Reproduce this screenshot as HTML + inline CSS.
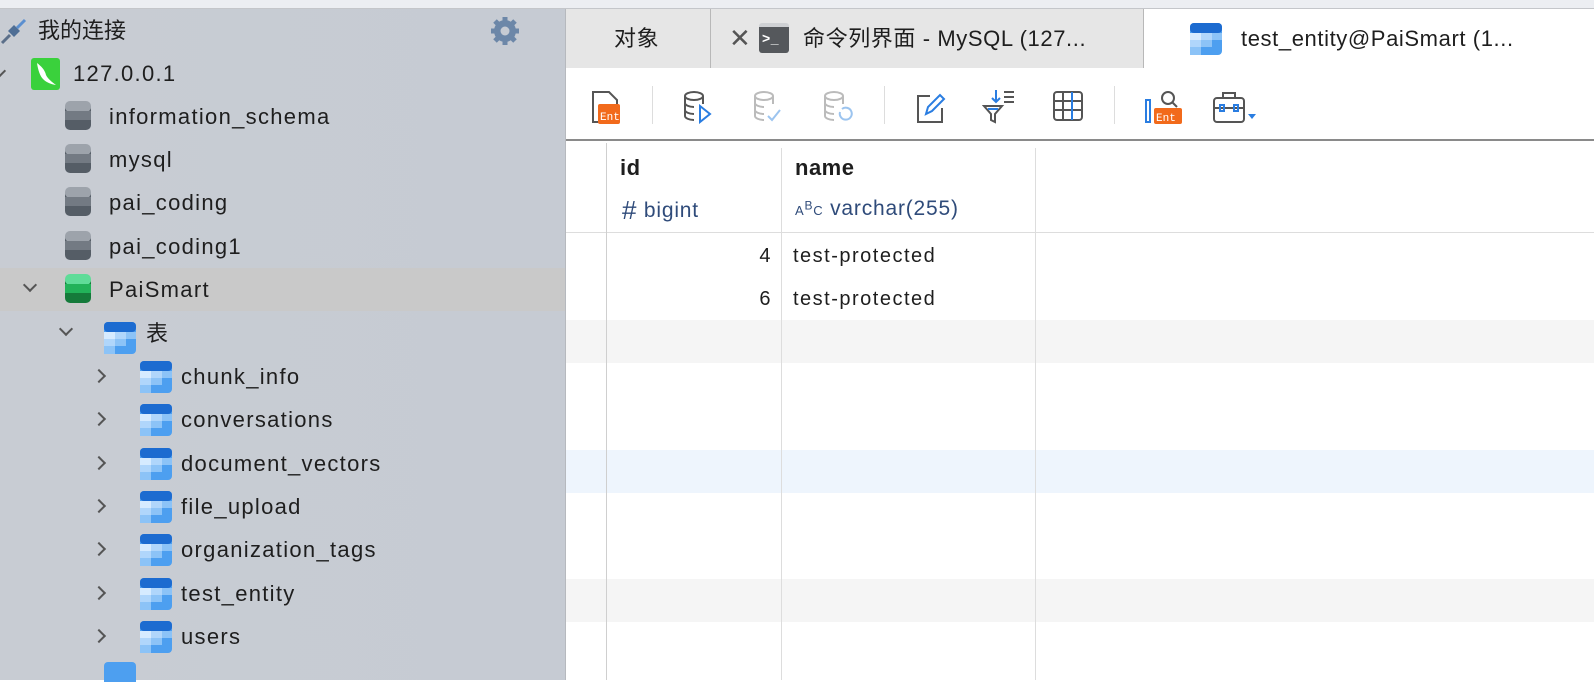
<!DOCTYPE html>
<html><head><meta charset="utf-8"><style>
*{margin:0;padding:0;box-sizing:border-box}
body{width:1594px;height:680px;overflow:hidden;position:relative;font-family:"Liberation Sans","Noto Sans CJK SC",sans-serif;background:#fff;color:#1e1e1e}
.top{position:absolute;left:0;top:0;width:1594px;height:9px;background:#eceef2;border-bottom:1px solid #c4c6ca}
.side{position:absolute;left:0;top:9px;width:566px;height:671px;background:linear-gradient(90deg,#c8ccd3,#c6cbd3);border-right:1px solid #b6b9be}
.row{position:absolute;left:0;width:565px;height:43px;font-size:22px;line-height:43px;letter-spacing:1.3px}
.row span{position:absolute}
.hl{background:#c9c9c9}
.chev{position:absolute;width:10px;height:10px;border-right:2px solid #555;border-bottom:2px solid #555}
.tabs{position:absolute;left:566px;top:9px;width:1028px;height:59px;background:#e6e6e6}
.tab{position:absolute;top:0;height:59px;font-size:22px;line-height:59px;border-right:1px solid #b8b8b8;letter-spacing:0.6px;white-space:nowrap}
.tb{position:absolute;left:566px;top:68px;width:1028px;height:73px;background:#fff;border-bottom:2px solid #8a8a8a}
.sep{position:absolute;top:18px;width:1px;height:38px;background:#ddd}
.grid{position:absolute;left:566px;top:143px;width:1028px;height:537px}
.vl{position:absolute;top:0;width:1px;background:#ddd}
.cell{position:absolute;font-size:20px;letter-spacing:1.5px;white-space:nowrap}
</style></head><body>
<div class="top"></div>
<div class="side">
 <div class="row" style="top:0"><svg style="position:absolute;left:0;top:8px" width="28" height="28" viewBox="0 0 28 28"><path d="M2 26 L10 18" stroke="#5b6f8a" stroke-width="3"/><path d="M8 14 L14 20 L20 14 L14 8Z" fill="#4f6e95"/><path d="M17 11 L25 3" stroke="#5b8fd0" stroke-width="3"/></svg><span style="left:38px;letter-spacing:0">我的连接</span>
 <svg style="position:absolute;left:489px;top:6px" width="32" height="32" viewBox="0 0 32 32"><g fill="#6c87a8"><circle cx="16" cy="16" r="11"/><g stroke="#6c87a8" stroke-width="5"><path d="M16 2v28M2 16h28M6 6l20 20M26 6L6 26"/></g></g><circle cx="16" cy="16" r="4.5" fill="#c6cbd3"/></svg></div>
 <div class="row" style="top:43px"><div class="chev" style="left:-6px;top:14px;transform:rotate(45deg)"></div><div style="position:absolute;left:31px;top:6px;width:29px;height:32px;background:#3ad13c;border-radius:3px"><svg width="29" height="32" viewBox="0 0 29 32"><path d="M6 5 C10 8 14 12 15 17 C17 21 21 24 25 27 C19 26 15 24 12 21 C9 18 7 12 6 5Z" fill="#fff"/></svg></div><span style="left:73px">127.0.0.1</span></div>
 <div class="row" style="top:86px"><svg style="position:absolute;left:65px;top:6px" width="26" height="32" viewBox="0 0 26 32"><rect x="0" y="3" width="26" height="26" rx="5" fill="#555d66"/><rect x="0" y="0" width="26" height="11" rx="5" fill="#9da3ab"/><rect x="0" y="10" width="26" height="9" fill="#737a83"/></svg><span style="left:109px">information_schema</span></div>
 <div class="row" style="top:129px"><svg style="position:absolute;left:65px;top:6px" width="26" height="32" viewBox="0 0 26 32"><rect x="0" y="3" width="26" height="26" rx="5" fill="#555d66"/><rect x="0" y="0" width="26" height="11" rx="5" fill="#9da3ab"/><rect x="0" y="10" width="26" height="9" fill="#737a83"/></svg><span style="left:109px">mysql</span></div>
 <div class="row" style="top:172px"><svg style="position:absolute;left:65px;top:6px" width="26" height="32" viewBox="0 0 26 32"><rect x="0" y="3" width="26" height="26" rx="5" fill="#555d66"/><rect x="0" y="0" width="26" height="11" rx="5" fill="#9da3ab"/><rect x="0" y="10" width="26" height="9" fill="#737a83"/></svg><span style="left:109px">pai_coding</span></div>
 <div class="row" style="top:216px"><svg style="position:absolute;left:65px;top:6px" width="26" height="32" viewBox="0 0 26 32"><rect x="0" y="3" width="26" height="26" rx="5" fill="#555d66"/><rect x="0" y="0" width="26" height="11" rx="5" fill="#9da3ab"/><rect x="0" y="10" width="26" height="9" fill="#737a83"/></svg><span style="left:109px">pai_coding1</span></div>
 <div class="row hl" style="top:259px"><div class="chev" style="left:25px;top:12px;transform:rotate(45deg)"></div><svg style="position:absolute;left:65px;top:6px" width="26" height="32" viewBox="0 0 26 32"><rect x="0" y="3" width="26" height="26" rx="5" fill="#157a3a"/><rect x="0" y="0" width="26" height="11" rx="5" fill="#5fdc98"/><rect x="0" y="10" width="26" height="9" fill="#22b259"/></svg><span style="left:109px">PaiSmart</span></div>
 <div class="row" style="top:303px"><div class="chev" style="left:61px;top:12px;transform:rotate(45deg)"></div><svg style="position:absolute;left:104px;top:10px" width="32" height="32" viewBox="0 0 32 32"><rect width="32" height="32" rx="4" fill="#4d9ff0"/><rect x="0" y="10" width="11" height="7" fill="#d6ebff"/><rect x="11" y="10" width="11" height="7" fill="#b0d6fb"/><rect x="22" y="10" width="10" height="7" fill="#8cc3f7"/><rect x="0" y="17" width="11" height="7" fill="#b0d6fb"/><rect x="11" y="17" width="11" height="7" fill="#8cc3f7"/><rect x="0" y="24" width="11" height="8" fill="#8cc3f7"/><rect x="0" y="0" width="32" height="10" rx="4" fill="#1c6bd0"/></svg><span style="left:146px">表</span></div>
</div>
<div id="tbls"></div>
<div class="tabs">
 <div class="tab" style="left:0;width:145px;padding-left:48px">对象</div>
 <div class="tab" style="left:145px;width:433px;padding-left:92px"><span style="position:absolute;left:18px;font-size:26px;color:#555">✕</span><div style="position:absolute;left:48px;top:14px;width:30px;height:30px;border-radius:3px;color:#fff;font-size:14px;line-height:30px;font-weight:bold;padding-left:3px;background:linear-gradient(#cfd1d4 0 4px,#55585c 4px)">&gt;_</div>命令列界面 - MySQL (127...</div>
 <div class="tab" style="left:578px;width:450px;background:#fff;padding-left:97px;border:none"><svg style="position:absolute;left:46px;top:14px" width="32" height="32" viewBox="0 0 32 32"><rect width="32" height="32" rx="4" fill="#4d9ff0"/><rect x="0" y="10" width="11" height="7" fill="#d6ebff"/><rect x="11" y="10" width="11" height="7" fill="#b0d6fb"/><rect x="22" y="10" width="10" height="7" fill="#8cc3f7"/><rect x="0" y="17" width="11" height="7" fill="#b0d6fb"/><rect x="11" y="17" width="11" height="7" fill="#8cc3f7"/><rect x="0" y="24" width="11" height="8" fill="#8cc3f7"/><rect x="0" y="0" width="32" height="10" rx="4" fill="#1c6bd0"/></svg>test_entity@PaiSmart (1...</div>
</div>
<div class="tb">
 <svg style="position:absolute;left:24px;top:22px" width="34" height="36" viewBox="0 0 34 36"><path d="M3 2h16l8 8v22H3z" fill="none" stroke="#555" stroke-width="2"/><rect x="8" y="14" width="22" height="20" rx="2" fill="#f26a1b"/><text x="10" y="30" font-size="11" fill="#fff" font-family="Liberation Mono">Ent</text></svg>
 <div class="sep" style="left:86px"></div>
 <svg style="position:absolute;left:116px;top:22px" width="34" height="34" viewBox="0 0 34 34" fill="none" stroke="#555" stroke-width="2"><ellipse cx="12" cy="6" rx="9" ry="4"/><path d="M3 6v20c0 2 4 4 9 4M21 6v8M3 13c0 2 4 4 9 4M3 20c0 2 4 4 9 4"/><path d="M18 16l10 8-10 8z" stroke="#2a7de1"/></svg>
 <svg style="position:absolute;left:186px;top:22px" width="34" height="34" viewBox="0 0 34 34" fill="none" stroke="#bbb" stroke-width="2"><ellipse cx="12" cy="6" rx="9" ry="4"/><path d="M3 6v20c0 2 4 4 9 4M21 6v8M3 13c0 2 4 4 9 4M3 20c0 2 4 4 9 4"/><path d="M16 26l4 4 8-10" stroke="#9cc4ef"/></svg>
 <svg style="position:absolute;left:256px;top:22px" width="34" height="34" viewBox="0 0 34 34" fill="none" stroke="#bbb" stroke-width="2"><ellipse cx="12" cy="6" rx="9" ry="4"/><path d="M3 6v20c0 2 4 4 9 4M21 6v8M3 13c0 2 4 4 9 4M3 20c0 2 4 4 9 4"/><path d="M18 22a6 6 0 1 0 2-3" stroke="#9cc4ef"/></svg>
 <div class="sep" style="left:318px"></div>
 <svg style="position:absolute;left:348px;top:22px" width="34" height="34" viewBox="0 0 34 34" fill="none" stroke-width="2"><path d="M16 6H4v26h24V18" stroke="#555"/><path d="M12 24l2-7 12-12 4 4-12 12z" stroke="#2a7de1"/></svg>
 <svg style="position:absolute;left:416px;top:20px" width="36" height="36" viewBox="0 0 36 36" fill="none" stroke-width="2"><path d="M14 2v12M10 10l4 4 4-4" stroke="#2a7de1"/><path d="M22 4h10M22 9h10M22 14h10" stroke="#555"/><path d="M2 18h18l-7 8v8l-4-2v-6z" stroke="#555"/><path d="M6 21h10" stroke="#2a7de1"/></svg>
 <svg style="position:absolute;left:486px;top:22px" width="32" height="32" viewBox="0 0 32 32" fill="none" stroke-width="2"><rect x="2" y="2" width="28" height="28" rx="3" stroke="#555"/><path d="M2 11h28M2 20h28M11 2v28" stroke="#555"/><path d="M20 2v28" stroke="#2a7de1"/></svg>
 <div class="sep" style="left:548px"></div>
 <svg style="position:absolute;left:578px;top:20px" width="40" height="38" viewBox="0 0 40 38"><circle cx="24" cy="10" r="6" fill="none" stroke="#555" stroke-width="2"/><path d="M28 14l5 5" stroke="#555" stroke-width="2"/><rect x="2" y="12" width="4" height="22" fill="none" stroke="#2a7de1" stroke-width="2"/><rect x="10" y="20" width="28" height="16" rx="2" fill="#f26a1b"/><text x="12" y="33" font-size="11" fill="#fff" font-family="Liberation Mono">Ent</text></svg>
 <svg style="position:absolute;left:646px;top:22px" width="46" height="34" viewBox="0 0 46 34" fill="none" stroke="#555" stroke-width="2"><rect x="2" y="8" width="30" height="24" rx="3"/><path d="M11 8V3h12v5M2 18h30"/><rect x="8" y="15" width="4" height="6" stroke="#2a7de1"/><rect x="22" y="15" width="4" height="6" stroke="#2a7de1"/><path d="M36 24h8l-4 5z" fill="#2a7de1" stroke="none"/></svg>
</div>
<div class="grid">
 <div style="position:absolute;left:0;top:177px;width:1028px;height:43px;background:#f5f5f5"></div>
 <div style="position:absolute;left:0;top:307px;width:1028px;height:43px;background:#eef5fd"></div>
 <div style="position:absolute;left:0;top:436px;width:1028px;height:43px;background:#f5f5f5"></div>
 <div style="position:absolute;left:0;top:89px;width:1028px;height:1px;background:#ddd"></div>
 <div class="vl" style="left:40px;height:537px;background:#cfcfcf"></div>
 <div class="vl" style="left:215px;top:5px;height:532px"></div>
 <div class="vl" style="left:469px;top:5px;height:532px"></div>
 <div class="cell" style="left:54px;top:12px;font-size:22px;font-weight:bold;letter-spacing:0.5px">id</div>
 <div class="cell" style="left:229px;top:12px;font-size:22px;font-weight:bold;letter-spacing:0.5px">name</div>
 <div class="cell" style="left:56px;top:50px;color:#2f4b7a;font-size:21px;letter-spacing:0.8px"><span style="font-size:26px;position:relative;top:2px">#</span> bigint</div>
 <div class="cell" style="left:229px;top:54px;color:#2f4b7a;font-size:21px;letter-spacing:0.8px"><span style="font-size:13px">A<sup style="font-size:12px">B</sup>C</span> varchar(255)</div>
 <div class="cell" style="left:150px;top:102px;width:56px;text-align:right">4</div>
 <div class="cell" style="left:227px;top:102px">test-protected</div>
 <div class="cell" style="left:150px;top:145px;width:56px;text-align:right">6</div>
 <div class="cell" style="left:227px;top:145px">test-protected</div>
</div>
<script>
var n=["chunk_info","conversations","document_vectors","file_upload","organization_tags","test_entity","users"],h="";
var ic='<svg style="position:absolute;left:140px;top:6px" width="32" height="32" viewBox="0 0 32 32"><rect width="32" height="32" rx="4" fill="#4d9ff0"/><rect x="0" y="10" width="11" height="7" fill="#d6ebff"/><rect x="11" y="10" width="11" height="7" fill="#b0d6fb"/><rect x="22" y="10" width="10" height="7" fill="#8cc3f7"/><rect x="0" y="17" width="11" height="7" fill="#b0d6fb"/><rect x="11" y="17" width="11" height="7" fill="#8cc3f7"/><rect x="0" y="24" width="11" height="8" fill="#8cc3f7"/><rect x="0" y="0" width="32" height="10" rx="4" fill="#1c6bd0"/></svg>';
n.forEach(function(t,i){h+='<div class="row" style="top:'+(355+i*43.3)+'px">'+'<div class="chev" style="left:94px;top:16px;transform:rotate(-45deg)"></div>'+ic+'<span style="left:181px">'+t+'</span></div>';});
h+='<div style="position:absolute;left:104px;top:662px;width:32px;height:20px;background:#4d9ff0;border-radius:4px 4px 0 0"></div>';
document.getElementById("tbls").innerHTML=h;
</script>
</body></html>
